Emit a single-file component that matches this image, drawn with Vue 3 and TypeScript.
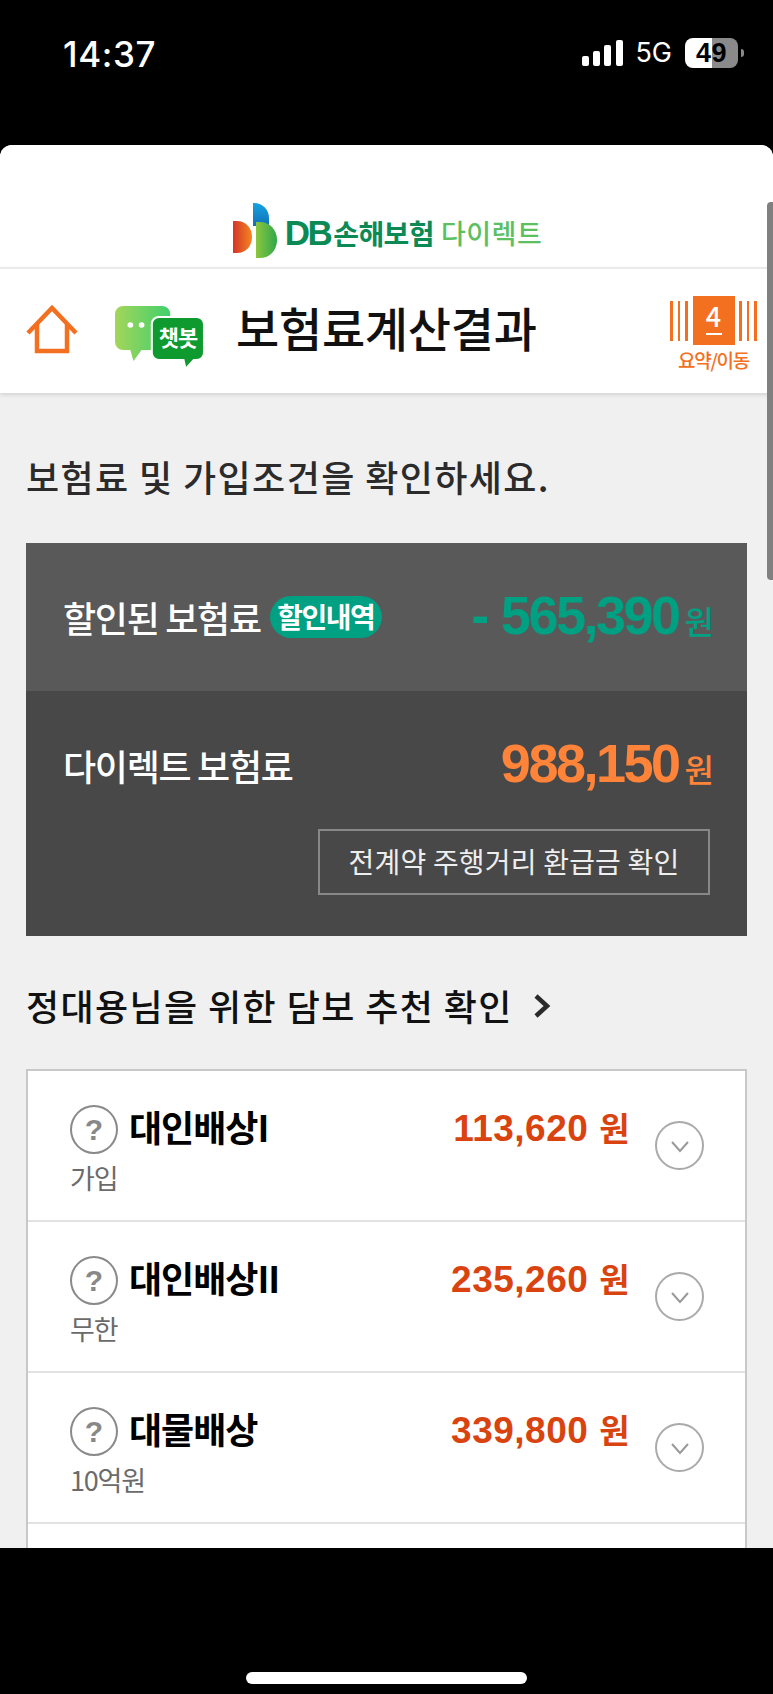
<script setup lang="ts">
interface Coverage { name: string; sub: string; price: string }
const rows: Coverage[] = [
  { name: '대인배상I', sub: '가입', price: '113,620' },
  { name: '대인배상II', sub: '무한', price: '235,260' },
  { name: '대물배상', sub: '10억원', price: '339,800' },
]
</script>

<template>
  <div class="phone">
    <div class="status">
      <span class="time">14:37</span>
      <div class="status-right">
        <svg class="signal" width="41" height="26" viewBox="0 0 41 26">
          <rect x="0" y="16" width="7" height="10" rx="2" fill="#fff" />
          <rect x="11" y="11" width="7" height="15" rx="2" fill="#fff" />
          <rect x="22" y="5" width="7" height="21" rx="2" fill="#fff" />
          <rect x="34" y="0" width="7" height="26" rx="2" fill="#fff" />
        </svg>
        <span class="net">5G</span>
        <div class="battery"><span>49</span></div>
        <i class="nub"></i>
      </div>
    </div>

    <div class="sheet">
      <div class="logo-row">
        <svg width="44" height="55" viewBox="0 0 44 55" class="logo-mark">
          <defs>
            <linearGradient id="lr" x1="0" y1="0" x2="1" y2="0"><stop offset="0" stop-color="#d5352a" /><stop offset="1" stop-color="#f5861f" /></linearGradient>
            <linearGradient id="lb" x1="0" y1="0" x2="0" y2="1"><stop offset="0" stop-color="#17a3e0" /><stop offset="1" stop-color="#1070b8" /></linearGradient>
            <linearGradient id="lg" x1="0" y1="0" x2="1" y2="0"><stop offset="0" stop-color="#8cc63f" /><stop offset="1" stop-color="#2ea84a" /></linearGradient>
          </defs>
          <path d="M0 18h4c9 0 15 7 15 16s-6 16-15 16H0z" fill="url(#lr)" />
          <path d="M20 0h1c9 0 15 7 15 15v8H20z" fill="url(#lb)" />
          <path d="M23 19h4c10 0 17 8 17 18s-7 18-17 18h-4z" fill="url(#lg)" />
        </svg>
        <span class="logo-a"><span class="logo-db">DB</span>손해보험</span>
        <span class="logo-b">다이렉트</span>
      </div>

      <header class="head">
        <svg class="home" width="52" height="49" viewBox="0 0 52 49">
          <path d="M2 28 26 3l24 25M11 18v28h30V18" fill="none" stroke="#f37021" stroke-width="4.500" />
        </svg>
        <div class="bot">
          <svg width="90" height="64" viewBox="0 0 88 64" preserveAspectRatio="none">
            <defs>
              <linearGradient id="bg1" x1="0" y1="0" x2="1" y2="0"><stop offset="0" stop-color="#a4d55a" /><stop offset="1" stop-color="#3fd06c" /></linearGradient>
            </defs>
            <path d="M8 0h38a8 8 0 0 1 8 8v28a8 8 0 0 1-8 8H26l-8 11-3-11H8a8 8 0 0 1-8-8V8a8 8 0 0 1 8-8z" fill="url(#bg1)" />
            <circle cx="15" cy="19" r="2.800" fill="#fff" />
            <circle cx="26" cy="19" r="2.800" fill="#fff" />
            <path d="M43 11h37a7 7 0 0 1 7 7v29a7 7 0 0 1-7 7H77l-8 9-2-9H43a7 7 0 0 1-7-7V18a7 7 0 0 1 7-7z" fill="#0f9a2f" stroke="#fff" stroke-width="2" />
          </svg>
          <span class="bot-text">챗봇</span>
        </div>
        <h1 class="page-title">보험료계산결과</h1>
        <div class="nav">
          <div class="nav-top">
            <i class="lines"></i>
            <b class="step"><span>4</span></b>
            <i class="lines"></i>
          </div>
          <span class="nav-label">요약/이동</span>
        </div>
      </header>

      <main class="body">
        <h2 class="lead">보험료 및 가입조건을 확인하세요.</h2>

        <section class="card">
          <div class="card-top">
            <span class="lbl">할인된 보험료</span>
            <span class="badge">할인내역</span>
            <span class="amt green"><em class="dash">-</em><em>565,390</em><small>원</small></span>
          </div>
          <div class="card-bot">
            <div class="card-line">
              <span class="lbl">다이렉트 보험료</span>
              <span class="amt orange"><em>988,150</em><small>원</small></span>
            </div>
            <div class="btn">전계약 주행거리 환급금 확인</div>
          </div>
        </section>

        <div class="rec">
          <span>정대용님을 위한 담보 추천 확인</span>
          <svg width="18" height="26" viewBox="0 0 18 26"><path d="M3 3l11 10L3 23" fill="none" stroke="#2a2a2a" stroke-width="4.500" /></svg>
        </div>

        <section class="list">
          <div v-for="r in rows" :key="r.name" class="row">
            <div class="row-left">
              <div class="row-name">
                <span class="q">?</span>
                <span class="name">{{ r.name }}</span>
              </div>
              <div class="sub">{{ r.sub }}</div>
            </div>
            <div class="price">{{ r.price }} <span class="won">원</span></div>
            <span class="chev">
              <svg width="20" height="14" viewBox="0 0 20 14"><path d="M2 2l8 9 8-9" fill="none" stroke="#999" stroke-width="2" /></svg>
            </span>
          </div>
          <div class="row"></div>
        </section>
      </main>
      <i class="scroll"></i>
    </div>

    <div class="foot"><i class="indicator"></i></div>
  </div>
</template>

<style>
html, body { margin: 0; background: #000; }
</style>

<style scoped>
* { box-sizing: border-box; }
.phone {
  width: 773px; height: 1694px; background: #000; display: flex; flex-direction: column; overflow: hidden;
  font-family: "Noto Sans CJK KR", "Liberation Sans", sans-serif;
}
.status { height: 145px; flex: none; display: flex; justify-content: space-between; align-items: flex-start; padding: 35px 29px 0 63px; color: #fff; }
.time { font: 500 35px/38px Inter, "Liberation Sans", sans-serif; letter-spacing: 0.600px; }
.status-right { display: flex; align-items: center; margin-top: 3px; }
.signal { display: block; }
.net { font: 400 27px/30px Inter, "Liberation Sans", sans-serif; margin: 0 13px 0 12px; color: #fff; }
.battery { width: 53px; height: 30px; border-radius: 8px; background: linear-gradient(90deg, #fff 51%, #8a8a8a 51%); color: #000; text-align: center; font: 700 27px/30px "Liberation Sans", sans-serif; letter-spacing: 0.500px; }
.nub { width: 3px; height: 8px; margin-left: 3px; border-radius: 0 3px 3px 0; background: #8a8a8a; }

.sheet { position: relative; height: 1403px; flex: none; background: #f0f0f0; border-radius: 12px 12px 0 0; overflow: hidden; }
.logo-row { height: 122px; background: #fff; display: flex; align-items: flex-end; justify-content: center; padding: 0 0 9px 2px; }
.logo-mark { margin-right: 8px; margin-bottom: 0; }
.logo-a { font-size: 28px; line-height: 40px; font-weight: 700; color: #0c8a55; letter-spacing: -0.600px; margin-right: 7px; margin-bottom: 5px; }
.logo-db { font: 700 35px/40px "Liberation Sans", sans-serif; letter-spacing: -2.500px; margin-right: 3px; }
.logo-b { font-size: 27px; line-height: 40px; font-weight: 500; color: #5cbf60; letter-spacing: 0.500px; margin-bottom: 5px; }

.head { height: 126px; background: #fff; border-top: 2px solid #eaeaea; box-shadow: 0 2px 4px rgba(0,0,0,.12); display: flex; align-items: flex-start; padding: 0 16px 0 26px; position: relative; }
.home { margin-top: 36px; flex: none; }
.bot { position: relative; margin: 37px 0 0 37px; width: 90px; height: 64px; flex: none; }
.bot svg { display: block; }
.bot-text { position: absolute; left: 37px; top: 15px; width: 52px; text-align: center; color: #fff; font-size: 22px; line-height: 30px; font-weight: 700; letter-spacing: -1px; }
.page-title { margin: 27px 0 0 31px; font-size: 47px; line-height: 62px; font-weight: 500; color: #111; letter-spacing: -0.300px; }
.nav { margin-left: auto; width: 87px; display: flex; flex-direction: column; align-items: center; margin-top: 27px; }
.nav-top { display: flex; align-items: center; justify-content: space-between; width: 87px; }
.lines { width: 18px; height: 40px; background: repeating-linear-gradient(90deg, #f37021 0 2.700px, transparent 2.700px 7.600px); }
.step { width: 42px; height: 49px; background: #f37021; color: #fff; display: flex; justify-content: center; align-items: flex-start; padding-top: 6px; font: 500 27px/1 "Noto Sans CJK KR", sans-serif; }
.step span { display: block; width: 16px; height: 33px; line-height: 28px; text-align: center; border-bottom: 2px solid #fff; }
.nav-label { font-size: 19px; line-height: 26px; color: #f37021; font-weight: 500; letter-spacing: -1.300px; margin-top: 2px; }

.body { padding: 0 26px; }
.lead { margin: 0; padding-top: 56px; font-size: 36px; line-height: 54px; font-weight: 500; color: #2b2b2b; letter-spacing: 1.400px; }
.card { margin-top: 40px; width: 721px; color: #fff; }
.card-top { height: 148px; background: #595959; display: flex; align-items: center; padding: 0 34px 0 37px; }
.card-bot { height: 245px; background: #484848; padding: 0 37px 0 37px; display: flex; flex-direction: column; }
.card-line { height: 148px; display: flex; align-items: center; justify-content: space-between; margin-bottom: -10px; margin-right: -3px; }
.lbl { font-size: 36px; line-height: 50px; font-weight: 500; letter-spacing: -1.300px; }
.badge { margin-left: 9px; width: 112px; height: 42px; border-radius: 21px; background: #00a082; text-align: center; font-size: 28px; line-height: 40px; font-weight: 700; letter-spacing: -1.500px; }
.amt { margin-left: auto; margin-top: -5px; display: flex; align-items: baseline; font-family: "Liberation Sans", sans-serif; font-weight: 700; }
.amt em { font-style: normal; font-size: 54px; line-height: 60px; letter-spacing: -2.500px; }
.amt .dash { margin-right: 14px; }
.amt small { font-family: "Noto Sans CJK KR", sans-serif; font-size: 32px; font-weight: 500; margin-left: 6px; letter-spacing: -1px; }
.green { color: #00a082; }
.orange { color: #ff8439; }
.btn { margin-left: auto; width: 392px; height: 66px; border: 2px solid #888; text-align: center; font-size: 28px; line-height: 60px; color: #eee; font-weight: 400; letter-spacing: 0.200px; }

.rec { height: 134px; display: flex; align-items: center; color: #111; font-size: 36px; font-weight: 500; letter-spacing: 1.400px; padding-top: 3px; }
.rec svg { margin-left: 20px; margin-top: 2px; }
.list { width: 721px; background: #fff; border: 2px solid #c8c8c8; border-bottom: 0; margin-top: -1px; }
.row { height: 151px; border-bottom: 2px solid #e2e2e2; position: relative; display: flex; align-items: flex-start; padding-left: 42px; }
.row-left { flex: 1; padding-top: 34px; }
.row-name { display: flex; align-items: center; }
.q { width: 48px; height: 49px; border-radius: 50%; border: 2px solid #8a8a8a; color: #888; display: flex; align-items: center; justify-content: center; font: 700 30px/1 "Liberation Sans", sans-serif; }
.name { margin-left: 11px; font-size: 36px; line-height: 40px; font-weight: 700; color: #000; letter-spacing: -1px; margin-top: -8px; }
.sub { margin: 6px 0 0 0; font-size: 27px; line-height: 36px; color: #6b6b6b; letter-spacing: -1.200px; }
.price { margin-top: 34px; font: 700 37px/44px "Liberation Sans", sans-serif; color: #d9430f; letter-spacing: 0.500px; }
.won { font-family: "Noto Sans CJK KR", sans-serif; font-size: 33px; }
.chev { margin: 50px 41px 0 25px; width: 49px; height: 49px; border: 2px solid #aaa; border-radius: 50%; display: flex; align-items: center; justify-content: center; flex: none; }
.chev svg { margin-top: 2px; }
.scroll { position: absolute; right: 0; top: 57px; width: 6px; height: 378px; border-radius: 4px 0 0 4px; background: #808080; }

.foot { flex: 1; display: flex; justify-content: center; padding-top: 124px; background: #000; }
.indicator { width: 281px; height: 12px; border-radius: 6px; background: #fff; }
</style>
